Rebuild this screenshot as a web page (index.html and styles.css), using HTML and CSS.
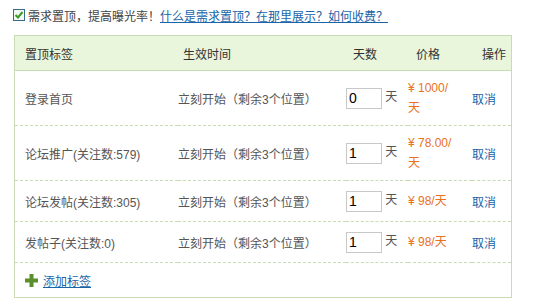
FILE: index.html
```html
<!DOCTYPE html>
<html>
<head lang="zh">
    <meta charset="UTF-8">
    <title>需求置顶</title>
    <link rel="stylesheet" href="styles.css">
</head>
<body>
<div class="g-top">
    <label class="m-check">
        <span class="box"><svg width="10" height="10" viewBox="0 0 10 10"><path d="M1.5 5 L4 7.5 L8.5 2" fill="none" stroke="#3d9a2a" stroke-width="2"/></svg></span>
        需求置顶，提高曝光率！
    </label>
    <a href="#" class="link">什么是需求置顶？在那里展示？如何收费？</a>
</div>
<div class="g-box">
    <table class="m-tb">
        <colgroup>
            <col class="c1"><col class="c2"><col class="c3"><col class="c4"><col class="c5">
        </colgroup>
        <thead>
        <tr>
            <th class="h1">置顶标签</th>
            <th class="h2">生效时间</th>
            <th class="h3">天数</th>
            <th class="h4">价格</th>
            <th class="h5">操作</th>
        </tr>
        </thead>
        <tbody>
        <tr class="tall">
            <td>登录首页</td>
            <td>立刻开始（剩余3个位置）</td>
            <td><input class="ipt" type="text" value="0"> 天</td>
            <td class="price">¥ 1000/天</td>
            <td><a href="#" class="op">取消</a></td>
        </tr>
        <tr class="tall">
            <td>论坛推广(关注数:579)</td>
            <td>立刻开始（剩余3个位置）</td>
            <td><input class="ipt" type="text" value="1"> 天</td>
            <td class="price">¥ 78.00/天</td>
            <td><a href="#" class="op">取消</a></td>
        </tr>
        <tr>
            <td>论坛发帖(关注数:305)</td>
            <td>立刻开始（剩余3个位置）</td>
            <td><input class="ipt" type="text" value="1"> 天</td>
            <td class="price">¥ 98/天</td>
            <td><a href="#" class="op">取消</a></td>
        </tr>
        <tr>
            <td>发帖子(关注数:0)</td>
            <td>立刻开始（剩余3个位置）</td>
            <td><input class="ipt" type="text" value="1"> 天</td>
            <td class="price">¥ 98/天</td>
            <td><a href="#" class="op">取消</a></td>
        </tr>
        </tbody>
    </table>
    <div class="m-add">
        <svg class="plus" width="13" height="13" viewBox="0 0 13 13"><path d="M4.5 0h4v4.5h4.5v4h-4.5v4.5h-4v-4.5h-4.5v-4h4.5z" fill="#5b8f2c"/></svg>
        <a href="#" class="link">添加标签</a>
    </div>
</div>
</body>
</html>
```

FILE: styles.css
```css
* {
    margin: 0;
    padding: 0;
}
body {
    font-family: "Liberation Sans", "Noto Sans CJK SC", sans-serif;
    font-size: 12px;
    color: #444;
    background: #fff;
}
a {
    text-decoration: none;
}
.g-top {
    display: flex;
    align-items: center;
    height: 22px;
    padding: 4px 0 0 13px;
}
.m-check {
    display: flex;
    align-items: center;
    color: #444;
}
.m-check .box {
    display: flex;
    align-items: center;
    justify-content: center;
    width: 10px;
    height: 10px;
    border: 1px solid #3a6a8a;
    background: #f4f8f4;
    margin-right: 3px;
}
.link {
    color: #1a64a8;
    text-decoration: underline;
}
.g-box {
    margin: 9px 0 0 14px;
    width: 496px;
    border: 1px solid #c8dcb4;
}
.m-tb {
    width: 100%;
    border-collapse: collapse;
    table-layout: fixed;
}
.c1 { width: 163px; }
.c2 { width: 168px; }
.c3 { width: 62px; }
.c4 { width: 64px; }
.c5 { width: 39px; }
.m-tb th {
    height: 34px;
    background: #eaf6dc;
    border-bottom: 1px solid #c8dcb4;
    text-align: left;
    font-weight: normal;
    color: #333;
}
.m-tb .h1 { padding-left: 10px; }
.m-tb .h2 { padding-left: 5px; }
.m-tb .h3 { padding-left: 7px; }
.m-tb .h4 { padding-left: 8px; }
.m-tb .h5 { padding-left: 10px; }
.m-tb td {
    height: 40px;
    border-bottom: 1px dashed #c8dcb4;
    color: #555;
    vertical-align: middle;
}
.m-tb tr.tall td {
    height: 54px;
}
.m-tb td:first-child {
    padding-left: 10px;
}
.m-tb td.price {
    color: #e8721e;
    line-height: 20px;
    padding-right: 16px;
}
.ipt {
    height: 19px;
    border: 1px solid #c8c8c8;
    font-family: "Liberation Sans", sans-serif;
    font-size: 14px;
    padding: 0 0 0 2px;
    box-sizing: content-box;
    width: 32px;
    vertical-align: middle;
    color: #000;
}
.op {
    color: #1a64a8;
}
.m-add {
    display: flex;
    align-items: center;
    height: 34px;
    padding-left: 10px;
}
.plus {
    margin-right: 5px;
}
```
